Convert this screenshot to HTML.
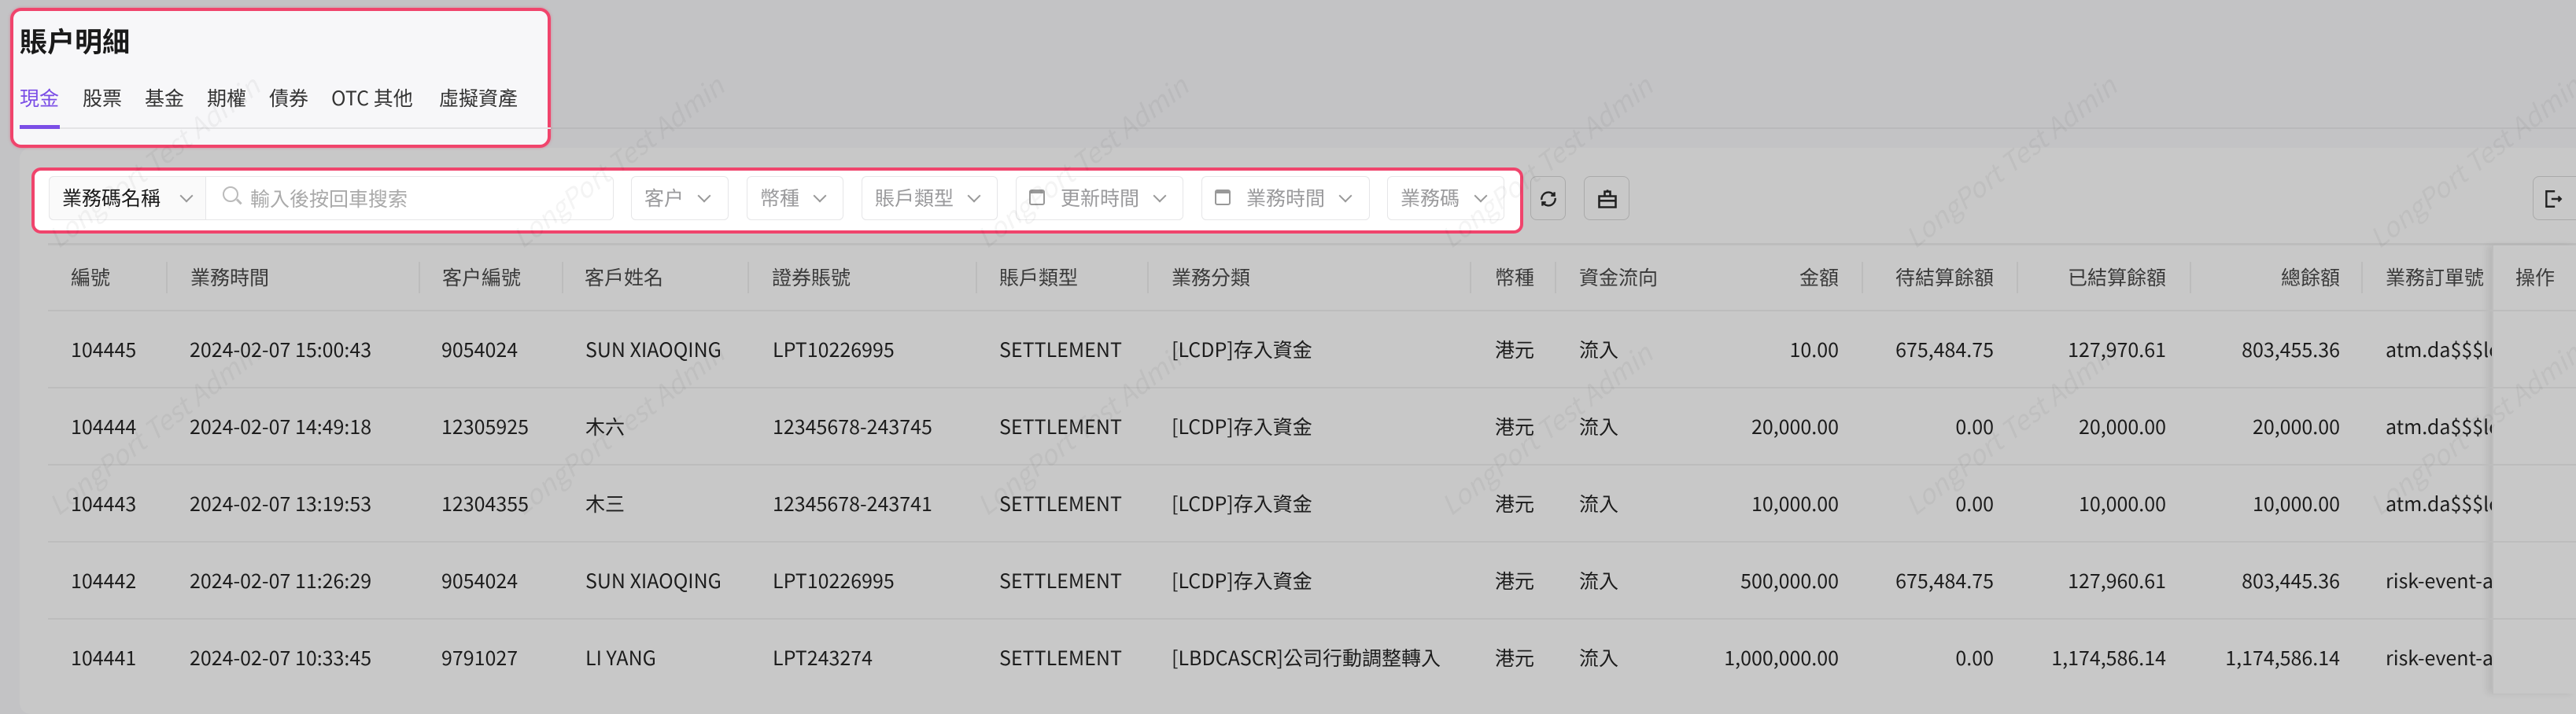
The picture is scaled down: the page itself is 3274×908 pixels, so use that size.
<!DOCTYPE html>
<html><head><meta charset="utf-8"><style>
*{margin:0;padding:0;box-sizing:border-box}
body{width:3274px;height:882px;overflow:hidden;background:#c3c3c5;font-family:"Noto Sans CJK TC","Liberation Sans",sans-serif;position:relative;color:#1e1e1e}
.a{position:absolute;white-space:nowrap}
.card{position:absolute;left:25px;top:188px;width:3260px;height:720px;background:#c8c8c8;border-radius:14px}
.panel{position:absolute;left:13px;top:10px;width:687px;height:178px;background:#f7f7f9;border:4px solid #f0446c;border-radius:14px;box-shadow:0 0 3px rgba(240,68,108,.5)}
.fbox{position:absolute;left:40px;top:213px;width:1896px;height:84px;background:#fff;border:4px solid #f0446c;border-radius:12px}
.inp{position:absolute;top:224px;height:56px;border:1.5px solid #e6e6e8;border-radius:6px;background:#fff;font-size:25px;color:#9a9a9c;line-height:53px;padding-left:16px}
.chev{position:absolute;top:18px;width:12px;height:12px;border-right:2.5px solid #999;border-bottom:2.5px solid #999;transform:rotate(45deg)}
.btn{position:absolute;top:224px;height:56px;border:1.5px solid #aaa;border-radius:8px;background:#c8c8c8}
.h{position:absolute;top:334px;font-size:25px;line-height:36px;color:#3a3a3a;white-space:nowrap}
.sep{position:absolute;top:333px;width:2px;height:40px;background:#bcbcbc}
.line{position:absolute;left:61px;width:3220px;height:2px;background:#bdbdbd}
.c{position:absolute;font-size:25px;line-height:36px;white-space:nowrap;color:#1c1c1c}
.r{text-align:right}
.wm{position:absolute;font-size:34px;color:rgba(0,0,0,.045);transform:rotate(-38deg);white-space:nowrap;font-style:italic}
</style></head><body>
<div class="a" style="left:700px;top:162px;width:2574px;height:2px;background:#b9b9bb"></div>
<div class="card"></div>
<div class="panel">
 <div class="a" style="left:8px;top:14px;font-size:35px;line-height:48px;font-weight:bold;color:#1a1a1a">賬户明細</div>
 <div class="a" style="left:8px;top:92px;font-size:25px;line-height:36px;color:#7b4ee6">現金</div>
 <div class="a" style="left:88px;top:92px;font-size:25px;line-height:36px;color:#333">股票</div>
 <div class="a" style="left:167px;top:92px;font-size:25px;line-height:36px;color:#333">基金</div>
 <div class="a" style="left:246px;top:92px;font-size:25px;line-height:36px;color:#333">期權</div>
 <div class="a" style="left:325px;top:92px;font-size:25px;line-height:36px;color:#333">債券</div>
 <div class="a" style="left:404px;top:92px;font-size:25px;line-height:36px;color:#333">OTC 其他</div>
 <div class="a" style="left:541px;top:92px;font-size:25px;line-height:36px;color:#333">虛擬資產</div>
 <div class="a" style="left:8px;top:148px;width:675px;height:2px;background:#e4e4e6"></div>
 <div class="a" style="left:8px;top:145px;width:51px;height:5px;background:#7b4ee6"></div>
</div>
<div class="fbox"></div>
<div class="inp" style="left:62px;width:718px;background:#fff"></div>
<div class="inp" style="left:62px;width:200px;background:#fafafa;color:#1a1a1a;border-radius:6px 0 0 6px">業務碼名稱<div class="chev" style="left:168px"></div></div>
<div class="a" style="left:283px;top:237px;width:20px;height:20px;border:2.5px solid #bbb;border-radius:50%"></div>
<div class="a" style="left:300px;top:255px;width:8px;height:2.5px;background:#bbb;transform:rotate(45deg)"></div>
<div class="a" style="left:318px;top:234px;font-size:25px;line-height:36px;color:#aaa">輸入後按回車搜索</div>
<div class="inp" style="left:802px;width:124px">客户<div class="chev" style="left:86px"></div></div>
<div class="inp" style="left:949px;width:123px">幣種<div class="chev" style="left:86px"></div></div>
<div class="inp" style="left:1095px;width:173px">賬戶類型<div class="chev" style="left:136px"></div></div>
<div class="inp" style="left:1291px;width:213px;padding-left:56px">更新時間<div class="chev" style="left:176px"></div><div class="a" style="left:16px;top:16px;width:20px;height:20px;border:2.5px solid #999;border-radius:3px;border-top-width:5px"></div></div>
<div class="inp" style="left:1527px;width:214px;padding-left:56px">業務時間<div class="chev" style="left:176px"></div><div class="a" style="left:16px;top:16px;width:20px;height:20px;border:2.5px solid #999;border-radius:3px;border-top-width:5px"></div></div>
<div class="inp" style="left:1763px;width:149px">業務碼<div class="chev" style="left:112px"></div></div>
<div class="btn" style="left:1945px;width:45px"><svg class="a" style="left:9px;top:15px" width="26" height="26" viewBox="0 0 24 24" fill="none" stroke="#222" stroke-width="2.2"><path d="M4 13a8 8 0 0 1 13-7l2 2M20 11a8 8 0 0 1-13 7l-2-2"/><path d="M19 4v4h-4M5 20v-4h4"/></svg></div>
<div class="btn" style="left:2013px;width:58px"><svg class="a" style="left:15px;top:14px" width="28" height="28" viewBox="0 0 24 24" fill="none" stroke="#222" stroke-width="2.2"><path d="M3 9h18v12H3zM3 14h18M9 9V4h6v5M12 2v2"/></svg></div>
<div class="btn" style="left:3219px;width:70px"><svg class="a" style="left:12px;top:15px" width="26" height="26" viewBox="0 0 24 24" fill="none" stroke="#222" stroke-width="2.2"><path d="M14 3H4v18h10M10 12h11M18 9l3 3-3 3"/></svg></div>
<div class="a" style="left:61px;top:309px;width:3220px;height:3px;background:#bdbdbd"></div>

<div class="h" style="left:90px">編號</div><div class="sep" style="left:211px"></div>
<div class="h" style="left:242px">業務時間</div><div class="sep" style="left:532px"></div>
<div class="h" style="left:562px">客户編號</div><div class="sep" style="left:714px"></div>
<div class="h" style="left:743px">客戶姓名</div><div class="sep" style="left:950px"></div>
<div class="h" style="left:981px">證券賬號</div><div class="sep" style="left:1240px"></div>
<div class="h" style="left:1270px">賬戶類型</div><div class="sep" style="left:1458px"></div>
<div class="h" style="left:1489px">業務分類</div><div class="sep" style="left:1868px"></div>
<div class="h" style="left:1900px">幣種</div><div class="sep" style="left:1976px"></div>
<div class="h" style="left:2007px">資金流向</div>
<div class="h r" style="left:2137px;width:200px">金額</div><div class="sep" style="left:2366px"></div>
<div class="h r" style="left:2334px;width:200px">待結算餘額</div><div class="sep" style="left:2563px"></div>
<div class="h r" style="left:2553px;width:200px">已結算餘額</div><div class="sep" style="left:2783px"></div>
<div class="h r" style="left:2774px;width:200px">總餘額</div><div class="sep" style="left:3001px"></div>
<div class="h" style="left:3032px">業務訂單號</div>
<div class="a" style="left:3167px;top:312px;width:107px;height:570px;background:#c8c8c8;box-shadow:-6px 0 8px rgba(0,0,0,.08)"></div>
<div class="h" style="left:3197px">操作</div>

<div class="line" style="top:394px"></div>
<div class="line" style="top:492px"></div>
<div class="line" style="top:590px"></div>
<div class="line" style="top:688px"></div>
<div class="line" style="top:786px"></div>

<div style="position:absolute;left:0;top:426px">
<div class="c" style="left:90px">104445</div><div class="c" style="left:241px">2024-02-07 15:00:43</div><div class="c" style="left:561px">9054024</div><div class="c" style="left:744px">SUN XIAOQING</div><div class="c" style="left:982px">LPT10226995</div><div class="c" style="left:1270px">SETTLEMENT</div><div class="c" style="left:1489px">[LCDP]存入資金</div><div class="c" style="left:1900px">港元</div><div class="c" style="left:2007px">流入</div><div class="c r" style="left:2137px;width:200px">10.00</div><div class="c r" style="left:2334px;width:200px">675,484.75</div><div class="c r" style="left:2553px;width:200px">127,970.61</div><div class="c r" style="left:2774px;width:200px">803,455.36</div><div class="c" style="left:3032px;width:135px;overflow:hidden">atm.da$$$lcdp</div>
</div>
<div style="position:absolute;left:0;top:524px">
<div class="c" style="left:90px">104444</div><div class="c" style="left:241px">2024-02-07 14:49:18</div><div class="c" style="left:561px">12305925</div><div class="c" style="left:744px">木六</div><div class="c" style="left:982px">12345678-243745</div><div class="c" style="left:1270px">SETTLEMENT</div><div class="c" style="left:1489px">[LCDP]存入資金</div><div class="c" style="left:1900px">港元</div><div class="c" style="left:2007px">流入</div><div class="c r" style="left:2137px;width:200px">20,000.00</div><div class="c r" style="left:2334px;width:200px">0.00</div><div class="c r" style="left:2553px;width:200px">20,000.00</div><div class="c r" style="left:2774px;width:200px">20,000.00</div><div class="c" style="left:3032px;width:135px;overflow:hidden">atm.da$$$lcdp</div>
</div>
<div style="position:absolute;left:0;top:622px">
<div class="c" style="left:90px">104443</div><div class="c" style="left:241px">2024-02-07 13:19:53</div><div class="c" style="left:561px">12304355</div><div class="c" style="left:744px">木三</div><div class="c" style="left:982px">12345678-243741</div><div class="c" style="left:1270px">SETTLEMENT</div><div class="c" style="left:1489px">[LCDP]存入資金</div><div class="c" style="left:1900px">港元</div><div class="c" style="left:2007px">流入</div><div class="c r" style="left:2137px;width:200px">10,000.00</div><div class="c r" style="left:2334px;width:200px">0.00</div><div class="c r" style="left:2553px;width:200px">10,000.00</div><div class="c r" style="left:2774px;width:200px">10,000.00</div><div class="c" style="left:3032px;width:135px;overflow:hidden">atm.da$$$lcdp</div>
</div>
<div style="position:absolute;left:0;top:720px">
<div class="c" style="left:90px">104442</div><div class="c" style="left:241px">2024-02-07 11:26:29</div><div class="c" style="left:561px">9054024</div><div class="c" style="left:744px">SUN XIAOQING</div><div class="c" style="left:982px">LPT10226995</div><div class="c" style="left:1270px">SETTLEMENT</div><div class="c" style="left:1489px">[LCDP]存入資金</div><div class="c" style="left:1900px">港元</div><div class="c" style="left:2007px">流入</div><div class="c r" style="left:2137px;width:200px">500,000.00</div><div class="c r" style="left:2334px;width:200px">675,484.75</div><div class="c r" style="left:2553px;width:200px">127,960.61</div><div class="c r" style="left:2774px;width:200px">803,445.36</div><div class="c" style="left:3032px;width:135px;overflow:hidden">risk-event-abc</div>
</div>
<div style="position:absolute;left:0;top:818px">
<div class="c" style="left:90px">104441</div><div class="c" style="left:241px">2024-02-07 10:33:45</div><div class="c" style="left:561px">9791027</div><div class="c" style="left:744px">LI YANG</div><div class="c" style="left:982px">LPT243274</div><div class="c" style="left:1270px">SETTLEMENT</div><div class="c" style="left:1489px">[LBDCASCR]公司行動調整轉入</div><div class="c" style="left:1900px">港元</div><div class="c" style="left:2007px">流入</div><div class="c r" style="left:2137px;width:200px">1,000,000.00</div><div class="c r" style="left:2334px;width:200px">0.00</div><div class="c r" style="left:2553px;width:200px">1,174,586.14</div><div class="c r" style="left:2774px;width:200px">1,174,586.14</div><div class="c" style="left:3032px;width:135px;overflow:hidden">risk-event-abc</div>
</div>
<div class="a" style="left:3167px;top:312px;width:2px;height:570px;background:#bdbdbd"></div>

<div class="wm" style="left:30px;top:180px">LongPort Test Admin</div>
<div class="wm" style="left:620px;top:180px">LongPort Test Admin</div>
<div class="wm" style="left:1210px;top:180px">LongPort Test Admin</div>
<div class="wm" style="left:1800px;top:180px">LongPort Test Admin</div>
<div class="wm" style="left:2390px;top:180px">LongPort Test Admin</div>
<div class="wm" style="left:2980px;top:180px">LongPort Test Admin</div>
<div class="wm" style="left:30px;top:520px">LongPort Test Admin</div>
<div class="wm" style="left:620px;top:520px">LongPort Test Admin</div>
<div class="wm" style="left:1210px;top:520px">LongPort Test Admin</div>
<div class="wm" style="left:1800px;top:520px">LongPort Test Admin</div>
<div class="wm" style="left:2390px;top:520px">LongPort Test Admin</div>
<div class="wm" style="left:2980px;top:520px">LongPort Test Admin</div>
</body></html>
